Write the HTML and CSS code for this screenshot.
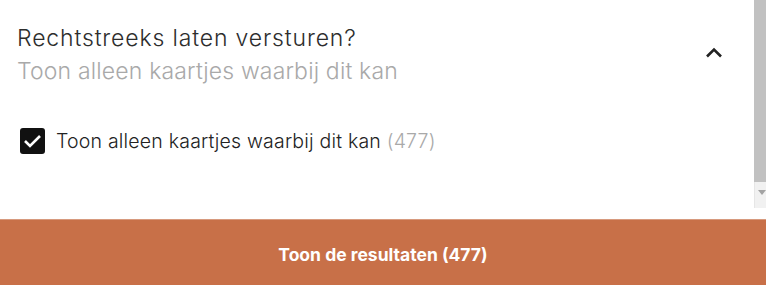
FILE: index.html
```html
<!DOCTYPE html>
<html lang="nl">
<head>
<meta charset="utf-8">
<link rel="stylesheet" href="styles.css">
</head>
<body>
<div class="page">
  <div class="panel">
    <div class="content">
      <div class="head">
        <div class="titles">
          <div class="title">Rechtstreeks laten versturen?</div>
          <div class="subtitle">Toon alleen kaartjes waarbij dit kan</div>
        </div>
        <svg class="chev" width="18" height="11" viewBox="0 0 18 11"><path d="M2 9.5 L9 2.5 L16 9.5" fill="none" stroke="#222" stroke-width="2.6"/></svg>
      </div>
      <label class="opt">
        <span class="box"><svg width="19" height="14" viewBox="0 0 19 14"><path d="M2 7 L7 12 L17 2" fill="none" stroke="#fff" stroke-width="2.6"/></svg></span>
        <span class="lbl">Toon alleen kaartjes waarbij dit kan <span class="count">(477)</span></span>
      </label>
    </div>
    <div class="scrollbar">
      <div class="thumb"></div>
      <div class="track"><span class="arrow"></span></div>
    </div>
  </div>
  <div class="footer">Toon de resultaten (477)</div>
</div>
</body>
</html>
```
FILE: styles.css
```css
* { box-sizing: border-box; }
html, body { margin: 0; padding: 0; background: #fff; }
body { font-family: Inter, "Noto Sans", sans-serif; color: #222; }
.page { width: 766px; height: 285px; display: flex; flex-direction: column; }
.panel { height: 208px; display: flex; }
.content { flex: 1; padding: 21px 0 0 17px; }
.head { display: flex; align-items: flex-start; padding-right: 31px; }
.titles { flex: 1; }
.title { font-size: 23px; font-weight: 300; line-height: 34px; letter-spacing: 0.85px; color: #2d2d2d; }
.subtitle { font-size: 23px; font-weight: 300; line-height: 33px; letter-spacing: 0.17px; color: #a9a9a9; }
.chev { margin-top: 26px; }
.opt { display: flex; align-items: center; gap: 11px; margin: 40px 0 0 3px; }
.box { width: 25px; height: 26px; background: #111; border-radius: 3px; display: flex; align-items: center; justify-content: center; }
.lbl { font-size: 19.5px; line-height: 25px; font-weight: 300; letter-spacing: 0.2px; color: #222; }
.count { color: #a9a9a9; }
.scrollbar { width: 12px; display: flex; flex-direction: column; background: #f1f1f1; }
.thumb { height: 182px; background: #c1c1c1; }
.track { flex: 1; position: relative; border-left: 1px solid #e6e6e6; }
.arrow { position: absolute; left: 3px; top: 8px; width: 0; height: 0; border-left: 4px solid transparent; border-right: 4px solid transparent; border-top: 5px solid #a3a3a3; }
.footer { margin-top: 11px; flex: 1; background: #c87048; border-top: 1px solid #d79a7e; color: #fff; font-weight: 700; font-size: 17.5px; display: flex; align-items: center; justify-content: center; padding-top: 4px; }
```
